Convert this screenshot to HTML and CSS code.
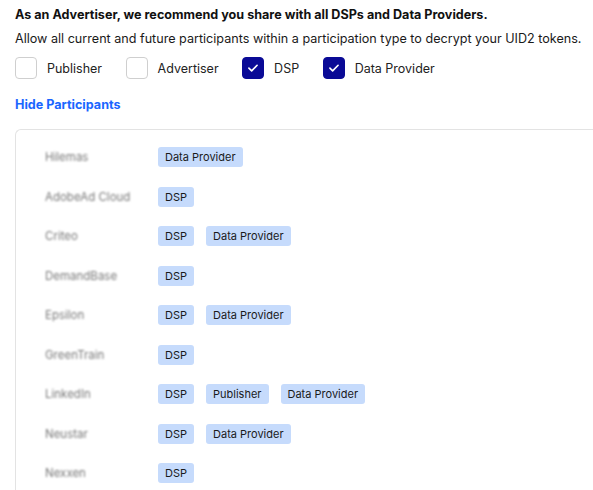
FILE: index.html
```html
<!DOCTYPE html>
<html>
<head>
<meta charset="utf-8">
<link rel="stylesheet" href="styles.css">
</head>
<body>
<div class="page">
  <h2 class="title">As an Advertiser, we recommend you share with all DSPs and Data Providers.</h2>
  <p class="desc">Allow all current and future participants within a participation type to decrypt your UID2 tokens.</p>
  <div class="types">
    <label class="type"><span class="box"></span>Publisher</label>
    <label class="type"><span class="box"></span>Advertiser</label>
    <label class="type"><span class="box checked"><svg viewBox="0 0 22 22" width="22" height="22"><path d="M6.5 11.2l3 3 6-6.2" fill="none" stroke="#fff" stroke-width="1.8" stroke-linecap="round" stroke-linejoin="round"/></svg></span>DSP</label>
    <label class="type"><span class="box checked"><svg viewBox="0 0 22 22" width="22" height="22"><path d="M6.5 11.2l3 3 6-6.2" fill="none" stroke="#fff" stroke-width="1.8" stroke-linecap="round" stroke-linejoin="round"/></svg></span>Data Provider</label>
  </div>
  <a class="toggle">Hide Participants</a>
  <div class="panel">
    <div class="row"><span class="name">Hilemas</span><span class="badge">Data Provider</span></div>
    <div class="row"><span class="name">AdobeAd Cloud</span><span class="badge">DSP</span></div>
    <div class="row"><span class="name">Criteo</span><span class="badge">DSP</span><span class="badge">Data Provider</span></div>
    <div class="row"><span class="name">DemandBase</span><span class="badge">DSP</span></div>
    <div class="row"><span class="name">Epsilon</span><span class="badge">DSP</span><span class="badge">Data Provider</span></div>
    <div class="row"><span class="name">GreenTrain</span><span class="badge">DSP</span></div>
    <div class="row"><span class="name">LinkedIn</span><span class="badge">DSP</span><span class="badge">Publisher</span><span class="badge">Data Provider</span></div>
    <div class="row"><span class="name">Neustar</span><span class="badge">DSP</span><span class="badge">Data Provider</span></div>
    <div class="row"><span class="name">Nexxen</span><span class="badge">DSP</span></div>
  </div>
</div>
</body>
</html>
```

FILE: styles.css
```css
html, body {
  margin: 0;
  padding: 0;
  background: #fff;
  overflow: hidden;
}
.page {
  padding: 5px 0 0 15px;
  font-family: Inter, "Noto Sans", sans-serif;
  color: #111;
}
.title {
  margin: 0;
  font-size: 12.6px;
  font-weight: 700;
  line-height: 20px;
}
.desc {
  margin: 4px 0 0;
  font-size: 12.6px;
  line-height: 20px;
  color: #1a1a1a;
}
.types {
  display: flex;
  align-items: center;
  margin-top: 8px;
  height: 22px;
}
.type {
  display: flex;
  align-items: center;
  font-size: 12.5px;
  color: #222;
  margin-right: 23.5px;
}
.box {
  width: 20px;
  height: 20px;
  border: 1px solid #cfcfcf;
  border-radius: 4px;
  margin-right: 10px;
  display: flex;
  align-items: center;
  justify-content: center;
  box-sizing: content-box;
}
.box.checked {
  background: #0a0a96;
  border-color: #0a0a96;
}
.box svg {
  display: block;
}
.toggle {
  display: block;
  margin-top: 17px;
  font-size: 12.6px;
  font-weight: 700;
  color: #1a66ff;
  line-height: 18px;
}
.panel {
  margin-top: 15px;
  border: 1px solid #e3e3e3;
  border-right: none;
  border-radius: 6px 0 0 0;
  padding: 17px 0 40px 29px;
  display: flex;
  flex-direction: column;
  gap: 19.5px;
}
.row {
  display: flex;
  align-items: center;
  height: 20px;
}
.name {
  width: 113px;
  font-size: 11.5px;
  color: #787878;
  filter: blur(1.1px);
  white-space: nowrap;
  overflow: hidden;
}
.badge {
  background: #c6dbfc;
  color: #1a1a1a;
  font-size: 11px;
  line-height: 20px;
  height: 20px;
  padding: 0 7px;
  border-radius: 3px;
  margin-right: 12px;
}
```
